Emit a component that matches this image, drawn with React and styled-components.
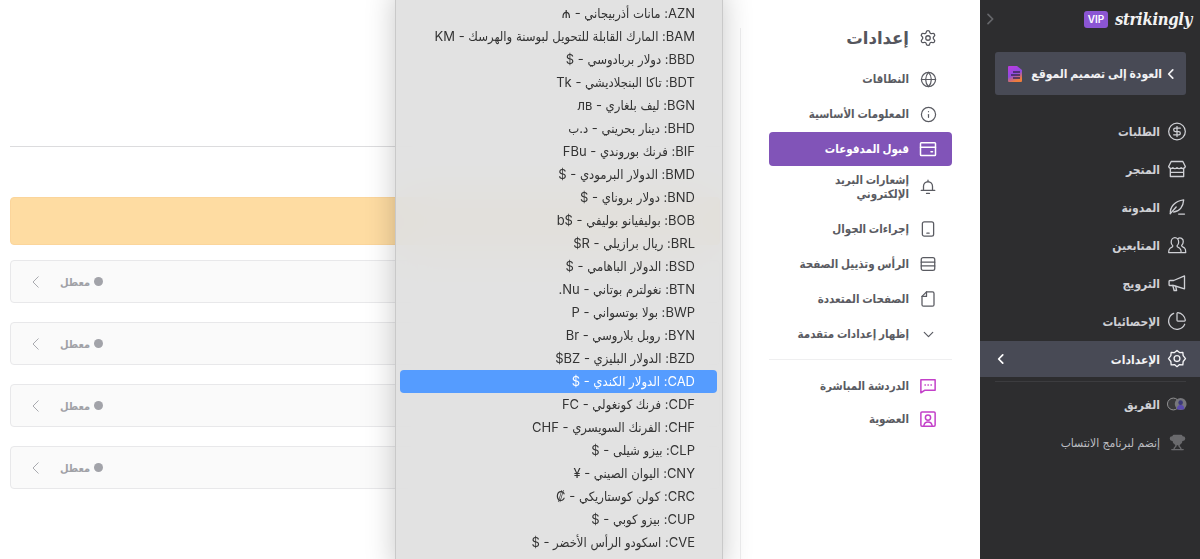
import React from "react";
import styled, { createGlobalStyle } from "styled-components";
import { Settings, Globe, Info, ChevronDown, CircleDollarSign, ChartPie, Trophy } from "lucide-react";

const Global = createGlobalStyle`
  html, body { margin: 0; padding: 0; background: #fff; }
  body { direction: rtl; font-family: "Inter", "DejaVu Sans", sans-serif; overflow: hidden; }
  #root { width: 1200px; height: 559px; overflow: hidden; position: relative; }
  * { box-sizing: border-box; }
`;

const Page = styled.div`
  display: flex;
  width: 1200px;
  height: 559px;
`;

/* ---------- dark sidebar ---------- */
const Sidebar = styled.aside`
  flex: 0 0 220px;
  background: #2d2d2f;
  color: #d4d5da;
  font-stretch: condensed;
  display: flex;
  flex-direction: column;
`;
const SideHeader = styled.header`
  height: 38px;
  display: flex;
  align-items: center;
  justify-content: space-between;
  padding: 0 8px 0 2px;
  color: #66676b;
`;
const Brand = styled.div`
  display: flex;
  align-items: center;
  gap: 7px;
`;
const Wordmark = styled.span`
  direction: ltr;
  font-family: "DejaVu Serif", serif;
  font-style: italic;
  font-weight: 700;
  font-size: 16.5px;
  letter-spacing: -0.3px;
  color: #f3f3f3;
`;
const Vip = styled.span`
  direction: ltr;
  background: #8b55d3;
  color: #fff;
  font-size: 10px;
  font-weight: 600;
  border-radius: 3px;
  width: 24px;
  height: 17px;
  display: flex;
  align-items: center;
  justify-content: center;
`;
const BackButton = styled.button`
  direction: rtl;
  font: inherit;
  font-stretch: condensed;
  margin: 14px 14px 0 15px;
  height: 43px;
  background: #484a55;
  border: 0;
  border-radius: 3px;
  color: #f1f1f3;
  font-size: 12px;
  font-weight: 700;
  white-space: nowrap;
  display: flex;
  align-items: center;
  gap: 2px;
  padding: 0 8px 0 0;
`;
const BadgeSlot = styled.span`
  margin-right: 7px;
  display: flex;
`;
const SideNav = styled.nav`
  margin-top: 17px;
  display: flex;
  flex-direction: column;
`;
const SideItem = styled.div`
  height: ${(p) => (p.$active ? "36px" : "38px")};
  margin: ${(p) => (p.$active ? "1px 0" : "0")};
  padding: 0 13px 0 14px;
  background: ${(p) => (p.$active ? "#484a55" : "transparent")};
  color: ${(p) => (p.$active ? "#f4f4f6" : p.$dim ? "#bcbdc2" : "#cfd0d5")};
  font-size: 12px;
  font-weight: ${(p) => (p.$dim ? 400 : 700)};
  display: flex;
  align-items: center;
  gap: 7px;
`;
const SideIcon = styled.span`
  width: 20px;
  height: 20px;
  flex: none;
  display: flex;
  align-items: center;
  justify-content: center;
`;
const Pushed = styled.span`
  margin-right: auto;
  display: flex;
  color: #fff;
`;
const SideRule = styled.hr`
  border: 0;
  height: 1px;
  background: #3c3c3f;
  margin: 3px 14px 3px 15px;
`;

/* ---------- settings panel ---------- */
const Panel = styled.section`
  flex: 0 0 240px;
  margin-top: 28px;
  padding: 0 28px;
  border-left: 1px solid #eeeeef;
  color: #5a5b62;
  display: flex;
  flex-direction: column;
`;
const PanelTitle = styled.h1`
  margin: 0 0 14px;
  height: 20px;
  display: flex;
  align-items: center;
  gap: 10px;
  padding-right: 15px;
  font-size: 16.5px;
  font-weight: 700;
  color: #55565d;
`;
const PanelItem = styled.div`
  min-height: ${(p) => (p.$tall ? "40px" : p.$compact ? "33px" : "34px")};
  margin-bottom: ${(p) => (p.$tall ? "5px" : p.$compact ? "0" : "1px")};
  padding: 0 15px 0 8px;
  border-radius: 4px;
  background: ${(p) => (p.$active ? "#8154b8" : "transparent")};
  color: ${(p) => (p.$active ? "#fff" : "#5a5b62")};
  font-size: 11.5px;
  font-stretch: condensed;
  font-weight: 700;
  line-height: 14px;
  display: flex;
  align-items: center;
  gap: 10px;
`;
const PanelLabel = styled.span`
  max-width: ${(p) => (p.$tall ? "90px" : "none")};
`;
const PanelIcon = styled.span`
  width: 18px;
  height: 18px;
  flex: none;
  display: flex;
  align-items: center;
  justify-content: center;
  color: ${(p) => p.$color || "inherit"};
`;
const PanelRule = styled.hr`
  border: 0;
  height: 1px;
  width: 100%;
  background: #efeff0;
  margin: 7px 0 9px;
`;

/* ---------- main column ---------- */
const Main = styled.main`
  flex: 1;
  padding: 146px 20px 0 10px;
  display: flex;
  flex-direction: column;
`;
const Rule = styled.hr`
  border: 0;
  height: 1px;
  width: 100%;
  background: #dcdcde;
  margin: 0 0 50px;
`;
const Notice = styled.div`
  height: 48px;
  background: #fedca2;
  border: 1px solid #fbd59b;
  border-radius: 4px;
  margin-bottom: 15px;
`;
const Card = styled.div`
  height: 43px;
  margin-bottom: 19px;
  background: #fafafa;
  border: 1px solid #e8e8ea;
  border-radius: 4px;
  display: flex;
  align-items: center;
  justify-content: flex-end;
  padding-left: 16px;
  color: #a7a8ad;
  gap: 15px;
`;
const Status = styled.span`
  display: flex;
  align-items: center;
  gap: 4px;
  font-size: 11px;
  font-stretch: condensed;
  font-weight: 700;
  color: #a0a1a6;
`;
const Dot = styled.i`
  width: 9px;
  height: 9px;
  border-radius: 50%;
  background: #a2a3a9;
`;

/* ---------- currency menu overlay ---------- */
const Menu = styled.ul`
  position: absolute;
  top: -9px;
  left: 395px;
  width: 328px;
  height: 580px;
  margin: 0;
  padding: 10px 5px 0 4px;
  list-style: none;
  background: rgba(223, 223, 223, 0.9);
  backdrop-filter: blur(24px);
  border: 1px solid #c9c9c9;
  box-shadow: 0 0 28px rgba(0, 0, 0, 0.22);
`;
const MenuItem = styled.li`
  height: 23px;
  padding-right: 22px;
  border-radius: 4px;
  background: ${(p) => (p.$selected ? "#559cff" : "transparent")};
  color: ${(p) => (p.$selected ? "#fff" : "#333")};
  font-size: 13px;
  font-stretch: condensed;
  line-height: 23px;
  white-space: nowrap;
`;

const currencies = [
  "AZN: مانات أذربيجاني - ₼",
  "BAM: المارك القابلة للتحويل لبوسنة والهرسك - KM",
  "BBD: دولار بربادوسي - $",
  "BDT: تاكا البنجلاديشي - Tk",
  "BGN: ليف بلغاري - лв",
  "BHD: دينار بحريني - د.ب",
  "BIF: فرنك بوروندي - FBu",
  "BMD: الدولار البرمودي - $",
  "BND: دولار بروناي - $",
  "BOB: بوليفيانو بوليفي - $b",
  "BRL: ريال برازيلي - R$",
  "BSD: الدولار الباهامي - $",
  "BTN: نغولترم بوتاني - Nu.",
  "BWP: بولا بوتسواني - P",
  "BYN: روبل بلاروسي - Br",
  "BZD: الدولار البليزي - BZ$",
  "CAD: الدولار الكندي - $",
  "CDF: فرنك كونغولي - FC",
  "CHF: الفرنك السويسري - CHF",
  "CLP: بيزو شيلى - $",
  "CNY: اليوان الصيني - ¥",
  "CRC: كولن كوستاريكي - ₡",
  "CUP: بيزو كوبي - $",
  "CVE: اسكودو الرأس الأخضر - $",
];

const Svg = ({ size = 18, children, ...rest }) => (
  <svg width={size} height={size} viewBox="0 0 24 24" fill="none" stroke="currentColor" strokeWidth="1.7" strokeLinecap="round" strokeLinejoin="round" {...rest}>
    {children}
  </svg>
);

const Chevron = ({ size = 16, w = 3, right }) => (
  <Svg size={size} strokeWidth={w}>
    <path d={right ? "M9 5l7 7-7 7" : "M15 5l-7 7 7 7"} />
  </Svg>
);
const WalletIcon = () => (
  <Svg strokeWidth="2">
    <rect x="2" y="3.5" width="20" height="17" rx="1" />
    <path d="M2 9.5h20M16 15.5h2" />
  </Svg>
);
const BellIcon = () => (
  <Svg>
    <path d="M6 16.500V11a6 6 0 0 1 12 0v5.500M3 16.500h18M12 3v2M10 20.500h4" />
  </Svg>
);
const PhoneIcon = () => (
  <Svg>
    <rect x="4.500" y="2.500" width="15" height="19" rx="2.500" />
    <path d="M10.500 17.500h3" />
  </Svg>
);
const RowsIcon = () => (
  <Svg>
    <rect x="3" y="3.500" width="18" height="17" rx="2.500" />
    <path d="M3 9.500h18M3 14.500h18" />
  </Svg>
);
const PagesIcon = () => (
  <Svg>
    <path d="M10 2.500h8a2 2 0 0 1 2 2v15a2 2 0 0 1-2 2H6a2 2 0 0 1-2-2V8.500z" />
    <path d="M10 2.500v6H4" />
  </Svg>
);
const ChatIcon = () => (
  <Svg strokeWidth="2">
    <path d="M2.500 3.500h19v14H8l-5.500 3.500z" />
    <path d="M8 10.500h.5M12 10.500h.5M16 10.500h.5" />
  </Svg>
);
const MemberIcon = () => (
  <Svg strokeWidth="2">
    <rect x="2.500" y="2.500" width="19" height="19" rx="1.500" />
    <circle cx="12" cy="10" r="3.500" />
    <path d="M6.500 21c.5-3.500 2.500-5 5.500-5s5 1.500 5.500 5" />
  </Svg>
);
const StoreIcon = () => (
  <Svg size={20} strokeWidth="1.600">
    <path d="M5 3h14l3 6a3 3 0 0 1-5 1.500 3.500 3.500 0 0 1-5 0 3.500 3.500 0 0 1-5 0A3 3 0 0 1 2 9z" />
    <path d="M4 12v9h16v-9M4 16h16" />
  </Svg>
);
const QuillIcon = () => (
  <Svg size={20} strokeWidth="1.600">
    <path d="M4 20c-.5-8 5-15 16-16.500-.5 8-5 14-12 14.500" />
    <path d="M4 20l7-8M14 20.500h7" />
  </Svg>
);
const FollowersIcon = () => (
  <Svg size={21} strokeWidth="1.500">
    <path d="M14 8a4.500 5.500 0 1 0-9 0c0 2 1 3.500 2 4.500 0 1.500-2 2-3.500 3C2 16.500 2 18 2 20.500h15c0-2.500 0-4-1.500-5-1.500-1-3.500-1.500-3.500-3 1-1 2-2.500 2-4.500z" />
    <path d="M13 3.800a4 4 0 0 1 6.500 3.700c0 2-1 3.500-2 4.500 0 1.500 2 2 3.500 3 1 .7 1.500 2.500 1.500 5.500h-5" />
  </Svg>
);
const MegaphoneIcon = () => (
  <Svg size={20} strokeWidth="1.600">
    <path d="M21 3.500v15.500L8 15H3.500a1 1 0 0 1-1-1v-4a1 1 0 0 1 1-1H8z" />
    <path d="M7 15l1.500 6h3l-1-5" />
  </Svg>
);
const BadgeGear = () => (
  <Svg size={22} strokeWidth="1.600">
    <path d="M12 1.800l3 2.500 4-.3.400 4 2.800 3.500-2.800 3.500-.4 4-4-.3-3 2.500-3-2.500-4 .3-.4-4L1.800 11.500l2.800-3.500.4-4 4 .3z" />
    <circle cx="12" cy="11.500" r="3.500" />
  </Svg>
);
const FileBadge = () => (
  <svg width="14" height="16" viewBox="0 0 14 16">
    <defs>
      <linearGradient id="fileGrad" x1="0" y1="0" x2="0.4" y2="1">
        <stop offset="0" stopColor="#c03ae0" />
        <stop offset="0.6" stopColor="#8d4ce0" />
        <stop offset="1" stopColor="#ef7d3c" />
      </linearGradient>
    </defs>
    <path d="M0 1a1 1 0 0 1 1-1h8l5 4v11a1 1 0 0 1-1 1H1a1 1 0 0 1-1-1z" fill="url(#fileGrad)" />
    <path d="M5 6h7M3 9h9M5 12h7" stroke="#3a2a55" strokeWidth="1.300" />
  </svg>
);
const TeamIcon = () => (
  <svg width="22" height="14" viewBox="0 0 22 14">
    <circle cx="7" cy="7" r="6.500" fill="#3a3a3c" stroke="#9a9a9c" />
    <circle cx="15" cy="7" r="6.500" fill="#77777c" />
    <circle cx="15" cy="5.500" r="2.500" fill="#3c3a78" />
    <path d="M11 13c0-4 1.500-5 4-5s4 1 4 5z" fill="#5a4ab0" />
  </svg>
);

const sideItems = [
  ["الطلبات", <CircleDollarSign size={21} strokeWidth={1.500} />],
  ["المتجر", <StoreIcon />],
  ["المدونة", <QuillIcon />],
  ["المتابعين", <FollowersIcon />],
  ["الترويج", <MegaphoneIcon />],
  ["الإحصائيات", <ChartPie size={20} strokeWidth={1.500} />],
];

const panelItems = [
  { t: "النطاقات", i: <Globe size={17} strokeWidth={1.700} /> },
  { t: "المعلومات الأساسية", i: <Info size={17} strokeWidth={1.700} /> },
  { t: "قبول المدفوعات", i: <WalletIcon />, active: true },
  { t: "إشعارات البريد الإلكتروني", i: <BellIcon />, tall: true },
  { t: "إجراءات الجوال", i: <PhoneIcon /> },
  { t: "الرأس وتذييل الصفحة", i: <RowsIcon /> },
  { t: "الصفحات المتعددة", i: <PagesIcon /> },
  { t: "إظهار إعدادات متقدمة", i: <ChevronDown size={17} strokeWidth={1.700} /> },
];

export default function App() {
  return (
    <Page>
      <Global />
      <Sidebar>
        <SideHeader>
          <Brand>
            <Wordmark>strikingly</Wordmark>
            <Vip>VIP</Vip>
          </Brand>
          <Chevron right w={2.600} />
        </SideHeader>
        <BackButton>
          <Chevron size={14} />
          <span>العودة إلى تصميم الموقع</span>
          <BadgeSlot><FileBadge /></BadgeSlot>
        </BackButton>
        <SideNav>
          {sideItems.map(([t, i]) => (
            <SideItem key={t}>
              <SideIcon>{i}</SideIcon>
              <span>{t}</span>
            </SideItem>
          ))}
          <SideItem $active>
            <SideIcon><BadgeGear /></SideIcon>
            <span>الإعدادات</span>
            <Pushed><Chevron size={14} /></Pushed>
          </SideItem>
          <SideRule />
          <SideItem>
            <SideIcon><TeamIcon /></SideIcon>
            <span>الفريق</span>
          </SideItem>
          <SideItem $dim>
            <SideIcon><Trophy size={17} color="#6a6a6d" fill="#6a6a6d" /></SideIcon>
            <span>إنضم لبرنامج الانتساب</span>
          </SideItem>
        </SideNav>
      </Sidebar>

      <Panel>
        <PanelTitle>
          <PanelIcon><Settings size={18} strokeWidth={1.700} /></PanelIcon>
          <span>إعدادات</span>
        </PanelTitle>
        {panelItems.map((p) => (
          <PanelItem key={p.t} $active={p.active} $tall={p.tall}>
            <PanelIcon>{p.i}</PanelIcon>
            <PanelLabel $tall={p.tall}>{p.t}</PanelLabel>
          </PanelItem>
        ))}
        <PanelRule />
        <PanelItem $compact>
          <PanelIcon $color="#c340c9"><ChatIcon /></PanelIcon>
          <span>الدردشة المباشرة</span>
        </PanelItem>
        <PanelItem $compact>
          <PanelIcon $color="#c340c9"><MemberIcon /></PanelIcon>
          <span>العضوية</span>
        </PanelItem>
      </Panel>

      <Main>
        <Rule />
        <Notice />
        {[0, 1, 2, 3].map((n) => (
          <Card key={n}>
            <Status><Dot />معطل</Status>
            <Chevron size={18} w={1.300} />
          </Card>
        ))}
      </Main>

      <Menu>
        {currencies.map((c) => (
          <MenuItem key={c} $selected={c.startsWith("CAD")}>{c}</MenuItem>
        ))}
      </Menu>
    </Page>
  );
}
